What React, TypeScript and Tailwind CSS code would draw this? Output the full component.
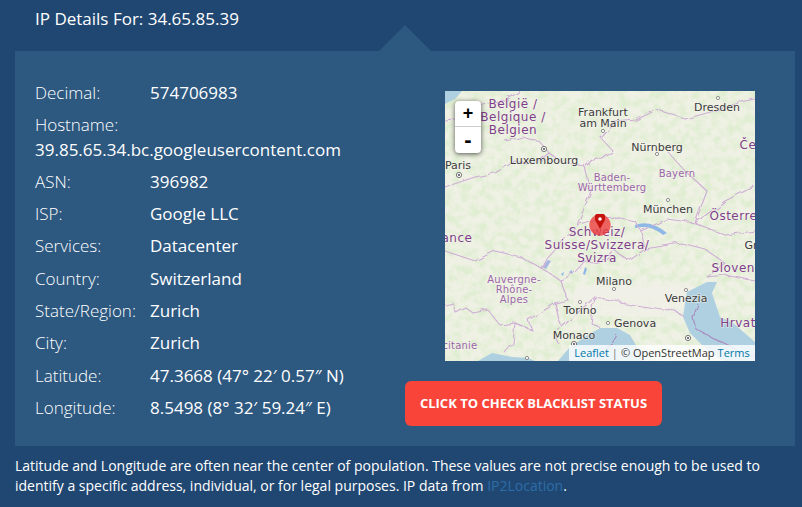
const rows = [
  { label: "ASN:", value: "396982" },
  { label: "ISP:", value: "Google LLC" },
  { label: "Services:", value: "Datacenter" },
  { label: "Country:", value: "Switzerland" },
  { label: "State/Region:", value: "Zurich" },
  { label: "City:", value: "Zurich" },
  { label: "Latitude:", value: "47.3668 (47° 22′ 0.57″ N)" },
  { label: "Longitude:", value: "8.5498 (8° 32′ 59.24″ E)" },
];

const cities = [
  { t: "Frankfurt", x: 158, y: 25 },
  { t: "am Main", x: 158, y: 36 },
  { t: "Dresden", x: 272, y: 20 },
  { t: "Nürnberg", x: 212, y: 60 },
  { t: "Luxembourg", x: 99, y: 73 },
  { t: "Paris", x: 13, y: 78 },
  { t: "München", x: 223, y: 122 },
  { t: "Milano", x: 169, y: 194 },
  { t: "Torino", x: 135, y: 223 },
  { t: "Venezia", x: 241, y: 211 },
  { t: "Genova", x: 190, y: 236 },
  { t: "Monaco", x: 129, y: 248 },
  { t: "Gr", x: 306, y: 158 },
];

const countries = [
  { t: "België /", x: 68, y: 17 },
  { t: "Belgique /", x: 68, y: 30 },
  { t: "Belgien", x: 68, y: 43 },
  { t: "Če", x: 303, y: 58 },
  { t: "Österreich", x: 298, y: 129 },
  { t: "Schweiz/", x: 152, y: 145 },
  { t: "Suisse/Svizzera/", x: 152, y: 158 },
  { t: "Svizra", x: 152, y: 171 },
  { t: "France", x: 6, y: 151 },
  { t: "Slovenija", x: 296, y: 181 },
  { t: "Hrvatska", x: 304, y: 236 },
];

const regions = [
  { t: "Baden-", x: 167, y: 90 },
  { t: "Württemberg", x: 167, y: 100 },
  { t: "Bayern", x: 232, y: 86 },
  { t: "Auvergne-", x: 69, y: 192 },
  { t: "Rhône-", x: 69, y: 202 },
  { t: "Alpes", x: 69, y: 212 },
  { t: "Occitanie", x: 8, y: 258 },
];

const dots = [
  [158, 40], [273, 7], [212, 63], [223, 109], [169, 198], [135, 211], [241, 199], [163, 232], [82, 267],
];

const rings = [
  [99, 58], [14, 84], [129, 253], [243, 247],
];

// country and region lines, in map pixels
const borders = [
  "M0 30 L20 28 L38 14 L60 10 L75 0",
  "M60 50 L78 46 L96 52 L104 62 L118 72 L140 76 L150 66 L158 68 L168 60 L155 46 L170 30 L190 28 L210 18 L240 28 L262 22 L300 10 L310 8",
  "M104 62 L92 72 L70 70 L50 82 L30 86 L0 96",
  "M140 76 L146 100 L138 120 L132 134 L118 150 L102 168 L97 178 L115 189",
  "M132 134 L150 128 L170 126 L190 130 L196 140 L222 128 L250 132 L280 110 L300 100 L310 96",
  "M250 132 L280 144 L310 140",
  "M196 140 L200 158 L184 170 L170 160 L156 172 L140 170 L127 184 L115 189",
  "M200 158 L236 152 L260 158 L280 172 L262 186 L280 184 L310 190",
  "M222 60 L240 80 L262 100 L250 132",
  "M0 160 L30 170 L50 160 L76 166 L97 178",
  "M0 214 L8 212 L10 221 L20 216 L28 222 L43 219 L55 234 L70 232 L87 239 L83 229 L103 217 L112 211",
  "M115 189 L123 209 L110 212 L114 229 L117 236 L108 240 L113 252",
  "M117 236 L150 206 L190 214 L230 220 L240 226",
  "M150 206 L146 232 L155 237",
  "M87 239 L70 232 L68 252 L60 262",
];

const MapTiles = () => {
  return (
    <svg className="block" width="310" height="270" viewBox="0 0 310 270">
      <defs>
        <filter id="terrain" x="0" y="0" width="100%" height="100%">
          <feTurbulence type="fractalNoise" baseFrequency="0.12" numOctaves="4" seed="11" />
          <feColorMatrix values="0 0 0 0 0.74  0 0 0 0 0.85  0 0 0 0 0.64  2.6 0 0 0 -0.95" />
        </filter>
        <filter id="wiggle" x="-5%" y="-5%" width="110%" height="110%">
          <feTurbulence type="fractalNoise" baseFrequency="0.09" numOctaves="2" seed="3" result="n" />
          <feDisplacementMap in="SourceGraphic" in2="n" scale="6" />
          <feGaussianBlur stdDeviation="0.3" />
        </filter>
        <filter id="soft">
          <feGaussianBlur stdDeviation="0.4" />
        </filter>
        <linearGradient id="plain" x1="0" y1="0" x2="0" y2="1">
          <stop offset="0" stopColor="#f1f0e8" stopOpacity="0" />
          <stop offset="0.3" stopColor="#f1f0e8" stopOpacity="0.95" />
          <stop offset="1" stopColor="#f1f0e8" stopOpacity="0.7" />
        </linearGradient>
      </defs>
      <rect width="310" height="270" fill="#eff1e4" />
      <rect width="310" height="270" filter="url(#terrain)" />
      <path d="M130 196 L175 190 L225 186 L250 196 L238 226 L190 226 L150 224 L128 212 Z" fill="url(#plain)" filter="url(#soft)" />
      <g filter="url(#soft)" fill="#aed0e0">
        <path d="M0 0 H17 L10 8 L0 13 Z" />
        <path d="M272 191 L262 191 L250 197 L242 201 L240 212 L238 226 L245 242 L262 259 L278 270 H310 V251 L288 232 L275 226 L267 202 Z" />
        <path d="M155 237 H172 L185 244 L192 256 L198 270 H113 L125 256 L143 244 Z" />
        <path d="M33 270 L47 262 L67 266 L83 267 L90 270 Z" />
        <path d="M97 176 L103 169 L106 170 L101 178 Z" fill="#a3b7e2" />
        <path d="M116 183 L119 181 L118 185 Z M124 181 L127 179 L127 183 Z M138 183 L140 176 L142 178 L140 184 Z M190 134 Q205 128 222 142 L218 144 Q205 133 190 137 Z" fill="#8fb8e6" />
      </g>
      <g filter="url(#wiggle)" fill="none" stroke="#cfaed6" strokeWidth="1.1" strokeLinejoin="round">
        {borders.map((d, i) => (
          <path key={i} d={d} />
        ))}
        <path d="M252 212 L247 226 L250 237 L268 247 L288 257 L310 266" stroke="#a98cc0" />
        <path d="M172 244 L165 256 L150 270" stroke="#a98cc0" />
      </g>
      {dots.map(([x, y], i) => (
        <circle key={i} cx={x} cy={y} r="1.6" fill="#fff" stroke="#666" strokeWidth="0.7" />
      ))}
      {rings.map(([x, y], i) => (
        <g key={i}>
          <circle cx={x} cy={y} r="2.6" fill="#fff" stroke="#555" strokeWidth="0.8" />
          <circle cx={x} cy={y} r="1" fill="#444" />
        </g>
      ))}
      <g fontFamily="'DejaVu Sans', sans-serif" textAnchor="middle" stroke="#f4f4ee" strokeOpacity="0.8" strokeWidth="1.2" paintOrder="stroke">
        {cities.map((c) => (
          <text key={c.t} x={c.x} y={c.y} fontSize="11" fill="#3a3a3a">{c.t}</text>
        ))}
        {countries.map((c) => (
          <text key={c.t} x={c.x} y={c.y} fontSize="12" letterSpacing="0.5" fill="#7e3f88">{c.t}</text>
        ))}
        {regions.map((c) => (
          <text key={c.t} x={c.x} y={c.y} fontSize="10" letterSpacing="0.2" fill="#9a66a6">{c.t}</text>
        ))}
      </g>
      <circle cx="155" cy="134" r="10.7" fill="#ee4040" opacity="0.8" />
      <path d="M150 125 Q150 123 152 123 H158 Q160 123 160 125 V129 L155 138 L150 129 Z" fill="#c4130d" />
      <circle cx="155" cy="128" r="1.8" fill="#fff" />
    </svg>
  );
};

const Map = () => {
  return (
    <div className="relative ml-10 h-[270px] w-[310px] overflow-hidden bg-[#eff1e4]">
      <MapTiles />
      <div className="absolute left-[10px] top-[10px] w-[26px] rounded-[4px] bg-white text-center font-['Liberation_Sans',sans-serif] font-bold text-black shadow-[0_1px_5px_rgba(0,0,0,0.65)]">
        <div className="h-[26px] border-b border-[#ccc] text-[18px] leading-[25px]">+</div>
        <div className="h-[26px] text-[22px] leading-[25px]">-</div>
      </div>
      <div className="absolute bottom-0 right-0 flex h-4 w-[186px] items-center justify-center bg-white/80 text-[11px] leading-4 text-[#333]">
        <span className="text-[#0078a8]">Leaflet</span>
        <span className="mx-[3px] text-[#777]">|</span>
        <span>© OpenStreetMap</span>
        <span className="ml-[3px] text-[#0078a8]">Terms</span>
      </div>
    </div>
  );
};

const App = () => {
  return (
    <main className="h-[507px] w-[802px] overflow-hidden bg-[#1f4772] font-['Open_Sans',sans-serif] text-white antialiased">
      <h1 className="px-[35px] pt-[7px] text-[17px] font-normal leading-6">IP Details For: 34.65.85.39</h1>
      <section className="relative ml-[15px] mt-5 flex h-[395px] w-[780px] bg-[#2d5880] pt-[26px]">
        <div className="absolute left-[364px] top-[-26px] h-0 w-0 border-x-[26px] border-b-[26px] border-x-transparent border-b-[#2d5880]" />
        <div className="w-[390px] pl-5 text-[17px] leading-[24.3px]">
          <div className="flex py-1">
            <span className="w-[115px] font-light">Decimal:</span>
            <span>574706983</span>
          </div>
          <div className="py-1">
            <div className="font-light">Hostname:</div>
            <div>39.85.65.34.bc.googleusercontent.com</div>
          </div>
          {rows.map((row) => (
            <div key={row.label} className="flex py-1">
              <span className="w-[115px] font-light">{row.label}</span>
              <span>{row.value}</span>
            </div>
          ))}
        </div>
        <div className="flex flex-col items-start pt-[14px]">
          <Map />
          <button className="mt-5 h-[45px] w-[257px] rounded-md bg-[#f94439] text-[13px] font-bold uppercase text-white">
            Click to check blacklist status
          </button>
        </div>
      </section>
      <p className="px-[15px] pt-[10px] text-sm leading-5">
        Latitude and Longitude are often near the center of population. These values are not precise enough to be used to identify a specific address, individual, or for legal purposes. IP data from <a className="text-[#2d6da8]">IP2Location</a>.
      </p>
    </main>
  );
};

export default App;
